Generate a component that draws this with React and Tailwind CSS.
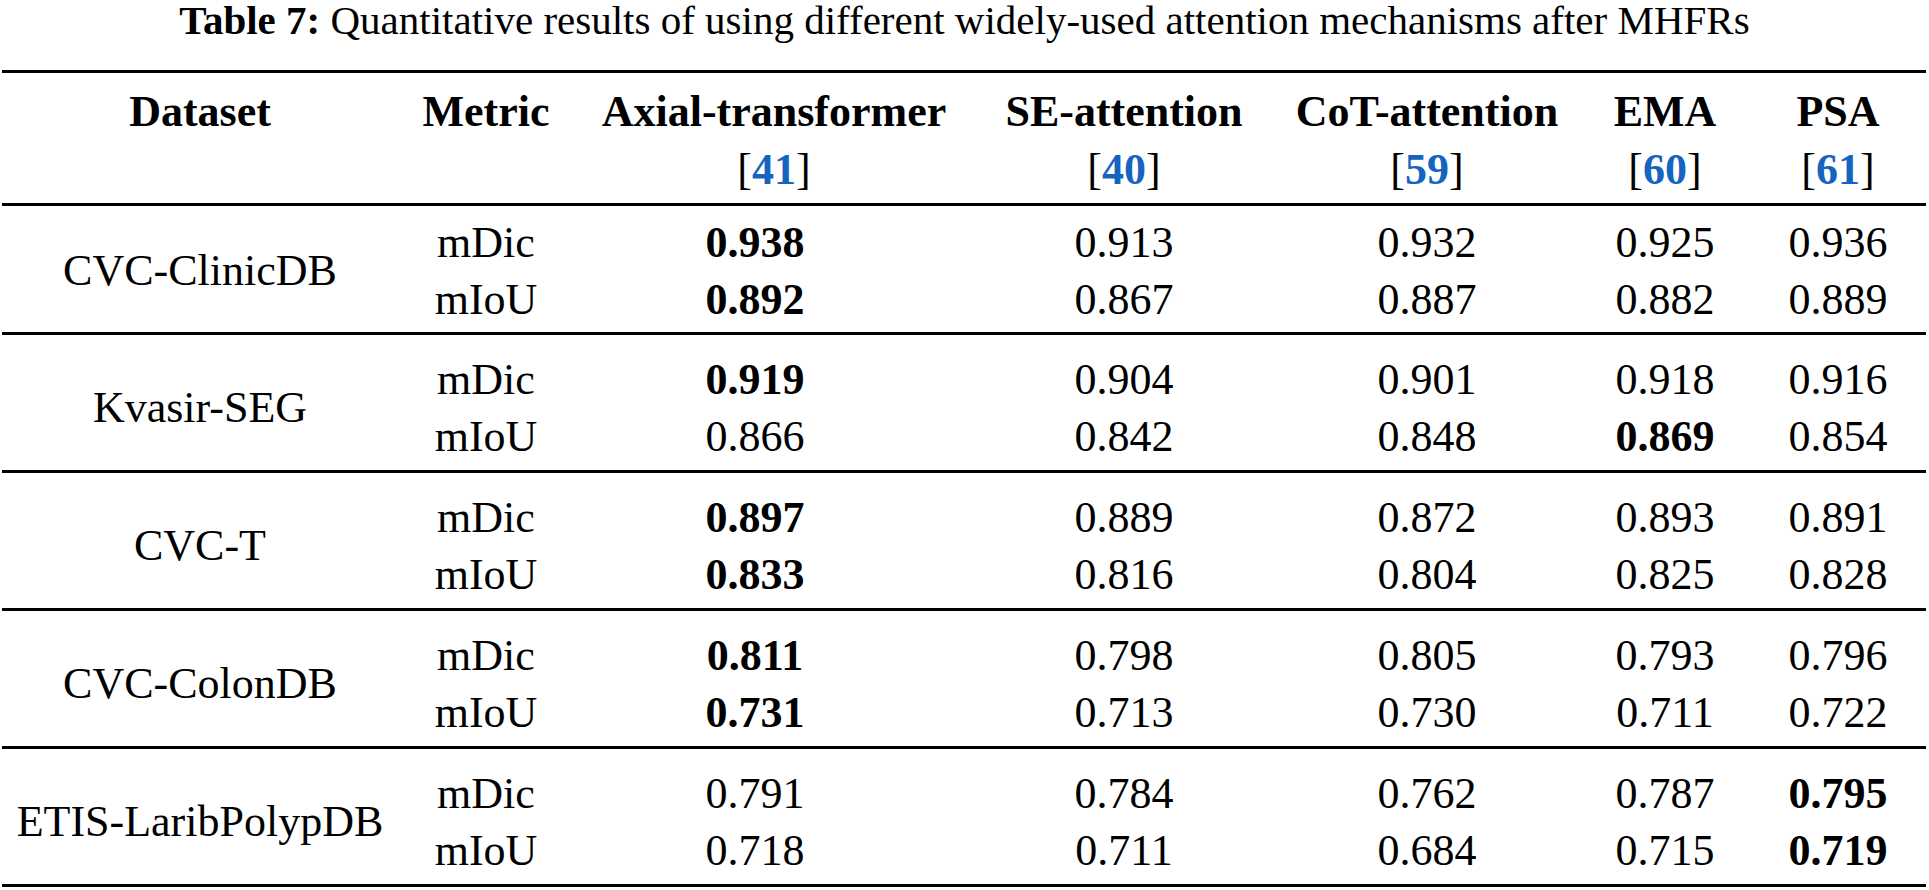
import React from 'react';

const serif = { fontFamily: '"Liberation Serif", "Times New Roman", serif' };

const methods = [
  { name: "Axial-transformer", ref: "41" },
  { name: "SE-attention", ref: "40" },
  { name: "CoT-attention", ref: "59" },
  { name: "EMA", ref: "60" },
  { name: "PSA", ref: "61" },
];

// value strings, a trailing * marks the best result (bold)
const groups = [
  {
    dataset: "CVC-ClinicDB",
    rows: [
      ["mDic", ["0.938*", "0.913", "0.932", "0.925", "0.936"]],
      ["mIoU", ["0.892*", "0.867", "0.887", "0.882", "0.889"]],
    ],
  },
  {
    dataset: "Kvasir-SEG",
    rows: [
      ["mDic", ["0.919*", "0.904", "0.901", "0.918", "0.916"]],
      ["mIoU", ["0.866", "0.842", "0.848", "0.869*", "0.854"]],
    ],
  },
  {
    dataset: "CVC-T",
    rows: [
      ["mDic", ["0.897*", "0.889", "0.872", "0.893", "0.891"]],
      ["mIoU", ["0.833*", "0.816", "0.804", "0.825", "0.828"]],
    ],
  },
  {
    dataset: "CVC-ColonDB",
    rows: [
      ["mDic", ["0.811*", "0.798", "0.805", "0.793", "0.796"]],
      ["mIoU", ["0.731*", "0.713", "0.730", "0.711", "0.722"]],
    ],
  },
  {
    dataset: "ETIS-LaribPolypDB",
    rows: [
      ["mDic", ["0.791", "0.784", "0.762", "0.787", "0.795*"]],
      ["mIoU", ["0.718", "0.711", "0.684", "0.715", "0.719*"]],
    ],
  },
];

const cols = "grid grid-cols-[396px_176px_400px_300px_306px_170px_176px]";

const Value = ({ v, first }) => {
  const best = v.endsWith("*");
  return (
    <div className={`text-center leading-[57px] ${first ? "pr-[38px]" : ""} ${best ? "font-bold" : ""}`}>
      {best ? v.slice(0, -1) : v}
    </div>
  );
};

const App = () => {
  return (
    <div className="min-h-screen bg-white text-black" style={serif}>
      <div className="h-[40px] text-center text-[41px] leading-[40px] whitespace-nowrap">
        <span className="font-bold">Table 7:</span> Quantitative results of using different widely-used attention mechanisms after MHFRs
      </div>

      <div className="ml-[2px] mt-[30px] w-[1924px] text-[44px] border-t-[3px] border-black">
        {/* header */}
        <div className={`${cols} pt-[10px] pb-[4px] border-b-[3px] border-black font-bold leading-[58px]`}>
          <div className="text-center">Dataset</div>
          <div className="text-center">Metric</div>
          {methods.map((m) => (
            <div key={m.name} className="text-center">
              <div className="whitespace-nowrap">{m.name}</div>
              <div>
                <span className="font-normal">[</span>
                <span className="text-[#1565c0]">{m.ref}</span>
                <span className="font-normal">]</span>
              </div>
            </div>
          ))}
        </div>

        {/* body */}
        {groups.map((g, gi) => (
          <div
            key={g.dataset}
            className={`${cols} grid-rows-[57px_57px] border-b-[3px] border-black ${gi === 0 ? "pt-[8px] pb-[4px]" : "pt-[16px] pb-[5px]"}`}
          >
            <div className="row-span-2 flex items-center justify-center whitespace-nowrap">{g.dataset}</div>
            {g.rows.map(([metric, vals], ri) => (
              <React.Fragment key={metric}>
                <div className={`text-center leading-[57px] ${ri === 0 ? "row-start-1" : "row-start-2"} col-start-2`}>{metric}</div>
                {vals.map((v, vi) => (
                  <div key={vi} className={ri === 0 ? "row-start-1" : "row-start-2"} style={{ gridColumnStart: vi + 3 }}>
                    <Value v={v} first={vi === 0} />
                  </div>
                ))}
              </React.Fragment>
            ))}
          </div>
        ))}
      </div>
    </div>
  );
};

export default App;
